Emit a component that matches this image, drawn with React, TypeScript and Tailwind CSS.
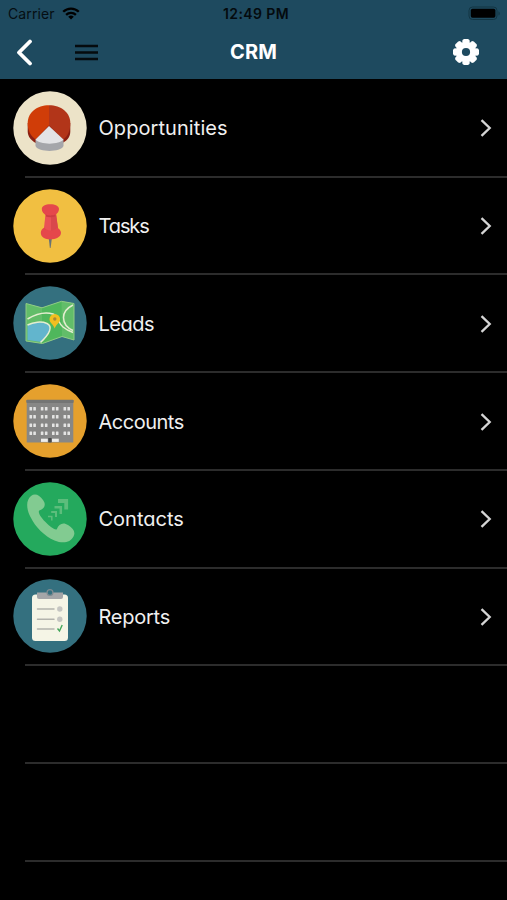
import { ReactNode } from "react";
import clsx from "clsx";

interface MenuItem {
    label: string;
    tracking: string;
    icon: ReactNode;
}

const Badge = ({ color, children }: { color: string; children: ReactNode }) => (
    <svg viewBox="0 0 74 74" className="block h-[74px] w-[74px] shrink-0">
        <circle cx="37" cy="37" r="36.7" fill={color} />
        {children}
    </svg>
);

const OpportunitiesIcon = () => (
    <Badge color="#ece3c8">
        <path d="M14.700 32v8.500c0 5 3.500 9 8 11.500l13.300-14 14.300 13.500c4.500-2.500 7-6 7-11V32z" fill="#8c2012" />
        <path d="M36 34.300L22.700 48.500C17.500 45 14.700 39.500 14.700 32 14.700 21.500 24 14.300 36 14.300z" fill="#d03d08" />
        <path d="M36 34.300L50.300 48.500C55 45 57.300 39.500 57.300 32 57.300 21.500 48 14.300 36 14.300z" fill="#b23519" />
        <path d="M22.500 48.500v6.500c3 6.500 25 6.500 28 0v-6.500z" fill="#a5a6aa" />
        <path d="M36 35L22.500 48.500c4 5.500 24 5.500 28 0z" fill="#e3e3e5" />
    </Badge>
);

const TasksIcon = () => (
    <Badge color="#f1bf41">
        <path d="M35.700 49h3.200l-1.300 10h-.7z" fill="#687276" />
        <path d="M33 21h9.500l3 22H30.500z" fill="#e95355" />
        <path d="M38 21h4.500L45.500 43H38z" fill="#d9474b" />
        <path d="M37.300 15.300c-5 0-8.500 2-8.500 4.700 0 3 2 4.500 4.200 6.500h8.800c2.200-2 4.200-3.500 4.200-6.500 0-2.700-3.700-4.700-8.700-4.700z" fill="#e5474b" />
        <path d="M31.500 38.500c-2.500 1-3.700 3-3.700 5.300 0 4.500 4.300 6.700 9.500 6.700s10.700-2.200 10.700-6.700c0-2.300-1.700-4.300-4.200-5.300-1.500 4-10.800 4-12.300 0z" fill="#e5474b" />
        <path d="M33 25.500c2 1.200 7 1.200 9 0l.2 2c-3 1-6.500 1-9.400 0z" fill="#ce3d42" />
    </Badge>
);

const LeadsIcon = () => (
    <Badge color="#34707f">
        <path d="M13 17.500l16 4.300L48.500 15.300 61 17.500V54l-12-3.500-19.500 7L13 55z" fill="#4fb75c" />
        <path d="M13 17.500l16 4.300v35.600L13 55zM48.500 15.300L61 17.500V54l-12-3.500z" fill="#62bd69" />
        <path d="M14.500 39c6-3 14-4 19.500-1.500 6 3 3 10-5.500 18.500l-14-2z" fill="#62b5cd" />
        <path d="M14.500 39c6-3 14-4 19.500-1.500 6 3 3 10-6.500 19M14.500 33C22 28.500 32 25.500 40 28c5 2 5 9 10 13 3 2.500 6 4 10 5.500M60 19c-6 3-9.500 7.500-9.500 12.500 0 6 4 10.500 9.500 13" fill="none" stroke="#e3edcf" strokeWidth="1.500" />
        <path d="M13 17.500l16 4.300L48.500 15.300 61 17.500V54l-12-3.500-19.500 7L13 55z" fill="none" stroke="#91cb86" strokeWidth="1" />
        <path d="M41.700 42.500c-1-4-5.200-5.500-5.200-9.300a5.300 5.300 0 0110.600 0c0 3.800-4.400 5.300-5.400 9.300z" fill="#f2bf20" />
        <circle cx="41.800" cy="33" r="1.700" fill="#a98835" />
    </Badge>
);

const windowColumns = [16.5, 20.3, 27.8, 31.9, 39, 42.9, 50.5, 54.4];
const windowRows = [23, 31, 39.400, 47.500];

const AccountsIcon = () => (
    <Badge color="#e5a02d">
        <rect x="13.700" y="16" width="46.600" height="42.500" fill="#878786" />
        <rect x="13.300" y="15.700" width="47.400" height="3.300" rx="1" fill="#747574" />
        {windowRows.map((y) =>
            windowColumns.map((x) => (
                <rect key={`${x}-${y}`} x={x} y={y} width="2.600" height="3.500" rx=".5" fill="#e4e4e3" />
            ))
        )}
        <rect x="28" y="54.700" width="6.800" height="3.200" fill="#eeeeec" />
        <rect x="39" y="54.700" width="6.800" height="3.200" fill="#eeeeec" />
        <rect x="35.300" y="54" width="3.200" height="4.500" fill="#494a4b" />
    </Badge>
);

const ContactsIcon = () => (
    <Badge color="#24a95d">
        <path
            d="M18 14c4-3 8.500-1 12 4 3.500 4.500 1.500 8.500-3.700 10.500-1.500 1 .3 5.500 6.200 11.500 5.500 5.500 10 8.500 11.300 7.200 2-5.500 6.500-7.500 11.200-4.200 5.500 3.500 7.800 7 5.500 11.500-3 6-10.500 7.500-19 4-10-4.500-19-13-24-23.500C13 26.500 13 18 18 14z"
            fill="#82cb91"
        />
        <g fill="none" stroke="#5dbd7c">
            <path d="M45 19h8.200v8.500" strokeWidth="3.800" />
            <path d="M41.500 25.200h6.300v6.800" strokeWidth="2.500" />
            <path d="M38.200 30h4.800v5" strokeWidth="2" />
            <path d="M35 34.500h3.800v4" strokeWidth="1.500" />
        </g>
    </Badge>
);

const ReportsIcon = () => (
    <Badge color="#34707f">
        <rect x="19" y="15.500" width="36" height="46.500" rx="3.500" fill="#f5f5e6" />
        <path d="M24 13.500h26v4.500a2 2 0 01-2 2H26a2 2 0 01-2-2z" fill="#a4a6a8" />
        <circle cx="37" cy="13.500" r="2.900" fill="#34707f" stroke="#7d8b91" strokeWidth="1.300" />
        <path d="M24.500 30H41M24.500 40.300H41M24.500 50H41" stroke="#b3b4ad" strokeWidth="1.500" strokeLinecap="round" />
        <circle cx="46.800" cy="30" r="2.700" fill="#c5c6c2" />
        <circle cx="46.800" cy="40.300" r="2.700" fill="#c5c6c2" />
        <path d="M44.500 49.500l2 2.500 2.700-6" fill="none" stroke="#43a65a" strokeWidth="1.400" />
    </Badge>
);

const items: MenuItem[] = [
    { label: "Opportunities", tracking: "tracking-[0.07px]", icon: <OpportunitiesIcon /> },
    { label: "Tasks", tracking: "tracking-[-1.1px]", icon: <TasksIcon /> },
    { label: "Leads", tracking: "tracking-[-0.5px]", icon: <LeadsIcon /> },
    { label: "Accounts", tracking: "tracking-[-0.5px]", icon: <AccountsIcon /> },
    { label: "Contacts", tracking: "tracking-[0px]", icon: <ContactsIcon /> },
    { label: "Reports", tracking: "tracking-[-0.25px]", icon: <ReportsIcon /> },
];

const StatusBar = () => (
    <div className="grid h-[27px] grid-cols-3 items-center pr-[6px] pl-2 text-black">
        <div className="flex items-center gap-[7px] text-[14px] tracking-[0.1px]">
            <span className="opacity-80">Carrier</span>
            <svg viewBox="0 0 18 13" className="h-[13px] w-[18px]" fill="none" stroke="#000" strokeWidth="2.300">
                <path d="M1.200 4.800a11 11 0 0115.600 0M4.100 7.900a7 7 0 019.800 0" />
                <path d="M9 12.600L6.200 9.800a4 4 0 015.600 0z" fill="#000" stroke="none" />
            </svg>
        </div>
        <span className="pl-[3px] text-center text-[14px] font-semibold tracking-[0.4px] whitespace-nowrap opacity-85">12:49 PM</span>
        <svg viewBox="0 0 33 15" className="h-[15px] w-[33px] justify-self-end">
            <rect x="1" y="1" width="28" height="12.500" rx="3.500" fill="none" stroke="#123543" />
            <rect x="2.800" y="2.800" width="24.600" height="9" rx="1.700" fill="#000" />
            <path d="M30.500 5.200c1.700.8 1.700 3.500 0 4.300z" fill="#123543" />
        </svg>
    </div>
);

const NavBar = () => (
    <div className="grid h-[52px] grid-cols-[1fr_auto_1fr] items-center pr-7 pb-[2px] pl-4">
        <div className="flex items-center gap-[42px]">
            <svg viewBox="0 0 17 27" className="h-[27px] w-[17px]" fill="none" stroke="#fff" strokeWidth="3.800" strokeLinecap="round" strokeLinejoin="round">
                <path d="M14 2.500L3 13.500l11 11" />
            </svg>
            <svg viewBox="0 0 23 17" className="h-[17px] w-[23px]" stroke="#050b0e" strokeWidth="2.600">
                <path d="M0 2h23M0 8.500h23M0 15h23" />
            </svg>
        </div>
        <h1 className="pl-[12px] text-center text-[20px] leading-none font-bold tracking-[0.2px] text-white">CRM</h1>
        <svg viewBox="0 0 26 26" className="h-[26px] w-[26px] justify-self-end" fill="#fff">
            <g>
                {[0, 45, 90, 135].map((angle) => (
                    <path key={angle} d="M11 0h4l1.500 1 .5 5v14l-.5 5-1.500 1h-4l-1.500-1-.5-5V6l.5-5z" transform={`rotate(${angle} 13 13)`} />
                ))}
            </g>
            <circle cx="13" cy="13" r="9.800" />
            <circle cx="13" cy="13" r="4.100" fill="#1e4a5f" />
        </svg>
    </div>
);

export default function App() {
    return (
        <div className="h-[900px] w-[507px] overflow-hidden bg-black font-['Inter','Liberation_Sans',sans-serif]">
            <header className="bg-[#1e4a5f]">
                <StatusBar />
                <NavBar />
            </header>
            <ul className="pt-px">
                {items.map((item) => (
                    <li key={item.label} className="h-[97.720px] pl-[25px]">
                        <div className="flex h-full items-center border-b-2 border-[#2c2c2c] pr-[15px]">
                            <div className="-ml-[12.500px] flex">{item.icon}</div>
                            <span className={clsx("ml-3 flex-1 pt-px text-[20px] leading-none text-[#f0f0f0] [font-feature-settings:'cv11','ss03']", item.tracking)}>
                                {item.label}
                            </span>
                            <svg viewBox="0 0 12 18" className="mt-px h-[18px] w-3" fill="none" stroke="#d5d5d5" strokeWidth="2.300">
                                <path d="M1.500 1.200L9.700 9l-8.200 7.800" />
                            </svg>
                        </div>
                    </li>
                ))}
                {[0, 1].map((n) => (
                    <li key={n} className="h-[97.720px] pl-[25px]">
                        <div className="h-full border-b-2 border-[#2c2c2c]"></div>
                    </li>
                ))}
            </ul>
        </div>
    );
}
